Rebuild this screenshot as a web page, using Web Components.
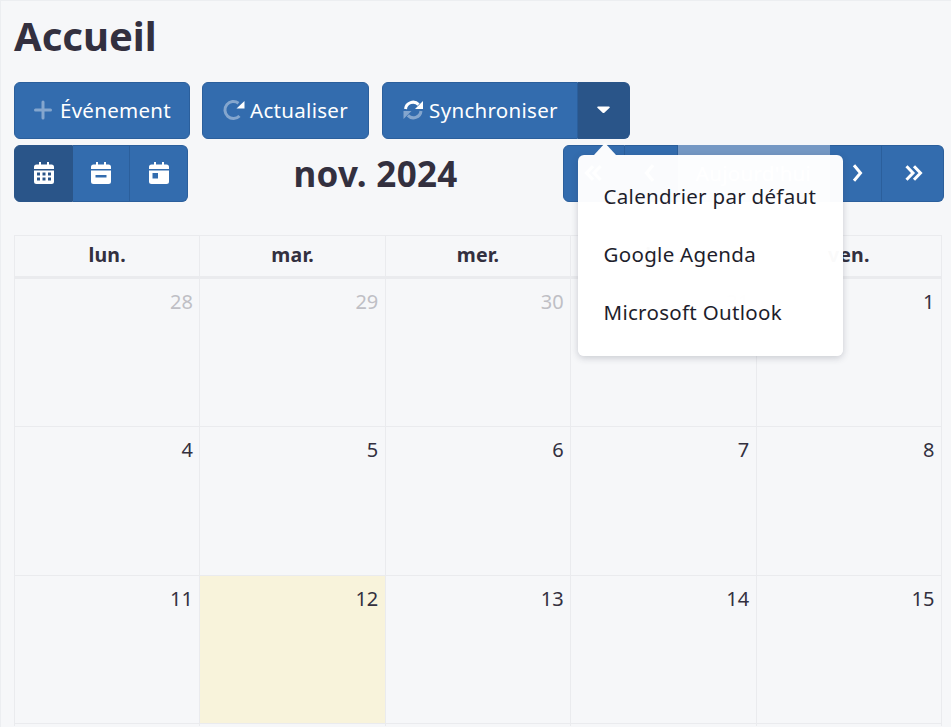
<!DOCTYPE html>
<html lang="fr">
<head>
<meta charset="utf-8">
<title>Accueil</title>
<style>
  html, body { margin: 0; height: 100%; overflow: hidden; }
  body {
    box-sizing: border-box;
    height: 727px;
    background: #f6f7f9;
    border-top: 1px solid #eceef1;
    border-left: 1px solid #eceef1;
    color: #33303f;
    font-family: "Noto Sans", "Liberation Sans", sans-serif;
  }
</style>
</head>
<body>
  <home-page></home-page>

<script>
const ICONS = {
  plus: `<svg viewBox="0 0 22 22" width="22" height="22"><path d="M10 3v16M2.500 11h15" stroke="#fff" stroke-opacity=".4" stroke-width="3" stroke-linecap="round" fill="none"/></svg>`,
  refresh: `<svg viewBox="0 0 22 22" width="22" height="22">
      <path d="M16.500 17A8.500 8.500 0 1 1 15.500 4.200" stroke="#fff" stroke-opacity=".4" stroke-width="3" fill="none"/>
      <path d="M21.500 2v7.500h-8z" fill="#fff"/></svg>`,
  sync: `<svg viewBox="0 0 22 22" width="22" height="22">
      <path d="M3.500 10A7.600 7.600 0 0 1 16.600 5.600" stroke="#fff" stroke-width="3" fill="none"/>
      <path d="M21 2v8h-8z" fill="#fff"/>
      <path d="M19 12A7.600 7.600 0 0 1 5.900 16.400" stroke="#fff" stroke-opacity=".4" stroke-width="3" fill="none"/>
      <path d="M1.500 20v-8h8z" fill="#fff" fill-opacity=".4"/></svg>`,
  caret: `<svg viewBox="0 0 14 8" width="13" height="7.500"><path d="M1 .5h12a.8.8 0 0 1 .6 1.300L7.600 7.400a.8.8 0 0 1-1.200 0L.4 1.800A.8.8 0 0 1 1 .5z" fill="#fff"/></svg>`,
  month: `<svg viewBox="0 0 20 22" width="20" height="22"><path fill="#fff" fill-rule="evenodd" d="M5 0h2v2.500h6V0h2v2.500h2.500A2.500 2.500 0 0 1 20 5v2H0V5a2.500 2.500 0 0 1 2.500-2.500H5zM0 8.500h20V19.500a2.500 2.500 0 0 1-2.500 2.500h-15A2.500 2.500 0 0 1 0 19.500zM3 10.500v3h3v-3zM8.500 10.500v3h3v-3zM14 10.500v3h3v-3zM3 15.500v3h3v-3zM8.500 15.500v3h3v-3zM14 15.500v3h3v-3z"/></svg>`,
  day: `<svg viewBox="0 0 20 22" width="20" height="22"><path fill="#fff" fill-rule="evenodd" d="M5 0h2v2.500h6V0h2v2.500h2.500A2.500 2.500 0 0 1 20 5v2H0V5a2.500 2.500 0 0 1 2.500-2.500H5zM0 8.500h20V19.500a2.500 2.500 0 0 1-2.500 2.500h-15A2.500 2.500 0 0 1 0 19.500zM4.500 13v2.500h11V13z"/></svg>`,
  week: `<svg viewBox="0 0 20 22" width="20" height="22"><path fill="#fff" fill-rule="evenodd" d="M5 0h2v2.500h6V0h2v2.500h2.500A2.500 2.500 0 0 1 20 5v2H0V5a2.500 2.500 0 0 1 2.500-2.500H5zM0 8.500h20V19.500a2.500 2.500 0 0 1-2.500 2.500h-15A2.500 2.500 0 0 1 0 19.500zM3.500 11v5.500h5.500V11z"/></svg>`,
  first: `<svg viewBox="0 0 22 22" width="22" height="22"><path d="M10 4.200 3.500 11l6.500 6.800M17.500 4.200 11 11l6.500 6.800" stroke="#fff" stroke-width="3" fill="none"/></svg>`,
  prev: `<svg viewBox="0 0 14 22" width="14" height="22"><path d="M9 3.200 2.500 11 9 18.800" stroke="#fff" stroke-width="3" fill="none"/></svg>`,
  next: `<svg viewBox="0 0 14 22" width="14" height="22"><path d="M5 3.200 11.500 11 5 18.800" stroke="#fff" stroke-width="3" fill="none"/></svg>`,
  last: `<svg viewBox="0 0 22 22" width="22" height="22"><path d="M4.500 4.200 11 11l-6.500 6.800M12 4.200 18.500 11 12 17.800" stroke="#fff" stroke-width="3" fill="none"/></svg>`
};

class UiButton extends HTMLElement {
  constructor() {
    super();
    const shadow = this.attachShadow({ mode: 'open' });
    const icon = ICONS[this.getAttribute('icon')] || '';
    shadow.innerHTML = `
      <style>
        :host {
          display: flex;
          box-sizing: border-box;
          align-items: center;
          justify-content: center;
          gap: 5px;
          height: 57px;
          padding-bottom: 2px;
          width: var(--w, auto);
          background: #336cae;
          border: 1px solid #2b5f9c;
          border-radius: 6px;
          color: #fff;
          font-size: 20.500px;
          letter-spacing: .3px;
          white-space: nowrap;
        }
        :host([grouped]) { border-radius: 0; border-left-width: 0; }
        :host([first]) { border-radius: 6px 0 0 6px; border-left-width: 1px; }
        :host([last]) { border-radius: 0 6px 6px 0; }
        :host([active]) { background: #2a5589; border-color: #2a5589; }
        :host([disabled]) { background: #7598c4; border-color: #7598c4; }
        svg { display: block; flex: none; }
      </style>
      ${icon}<slot></slot>
    `;
  }
}
customElements.define('ui-button', UiButton);

class ButtonGroup extends HTMLElement {
  constructor() {
    super();
    this.attachShadow({ mode: 'open' }).innerHTML = `
      <style>:host { display: flex; }</style>
      <slot></slot>
    `;
  }
}
customElements.define('button-group', ButtonGroup);

class SyncMenu extends HTMLElement {
  constructor() {
    super();
    this.attachShadow({ mode: 'open' }).innerHTML = `
      <style>
        :host {
          position: absolute;
          left: 578px;
          top: 155px;
          width: 265px;
          height: 201px;
          box-sizing: border-box;
          padding-top: 12px;
          background: rgba(255, 255, 255, .975);
          border-radius: 6px;
          box-shadow: 0 2px 7px rgba(40, 45, 70, .22);
          color: #1e1e2c;
          font-size: 20.500px;
          letter-spacing: .3px;
          z-index: 5;
        }
        .arrow {
          position: absolute;
          left: 16px;
          top: -12px;
          width: 0;
          height: 0;
          border: 11px solid transparent;
          border-top: 0;
          border-bottom: 12px solid rgba(255, 255, 255, .975);
        }
        ::slotted(div) {
          height: 58px;
          line-height: 58px;
          padding-left: 25.500px;
          white-space: nowrap;
        }
      </style>
      <div class="arrow"></div>
      <slot></slot>
    `;
  }
}
customElements.define('sync-menu', SyncMenu);

class MonthCalendar extends HTMLElement {
  constructor() {
    super();
    const days = ['lun.', 'mar.', 'mer.', 'jeu.', 'ven.'];
    const rows = [
      [[28, 1], [29, 1], [30, 1], [31, 1], [1]],
      [[4], [5], [6], [7], [8]],
      [[11], [12, 0, 1], [13], [14], [15]]
    ];
    const head = days.map(d => `<div class="th">${d}</div>`).join('');
    const body = rows.flat().map(([n, other, today]) =>
      `<div class="td${other ? ' other' : ''}${today ? ' today' : ''}">${n}</div>`).join('');
    // the fourth week only starts at the window's edge: its cells stay empty
    const tail = days.map(() => '<div class="tail"></div>').join('');
    this.attachShadow({ mode: 'open' }).innerHTML = `
      <style>
        :host {
          display: grid;
          grid-template-columns: repeat(5, 1fr);
          grid-template-rows: 42.500px repeat(3, 148.500px) 2px;
          border-top: 1px solid #eaebee;
          border-left: 1px solid #eaebee;
        }
        .th, .td, .tail {
          box-sizing: border-box;
          border-right: 1px solid #eaebee;
        }
        .th, .td { border-bottom: 1px solid #eaebee; }
        .th {
          border-bottom-width: 3px;
          font-size: 19.500px;
          font-weight: 700;
          letter-spacing: .2px;
          text-align: center;
          line-height: 38px;
        }
        .td {
          padding: 9px 6.500px 0 0;
          text-align: right;
          font-size: 20px;
          line-height: 27px;
        }
        .other { color: #bfbfc5; }
        .today { background: #f8f3db; }
      </style>
      ${head}${body}${tail}
    `;
  }
}
customElements.define('month-calendar', MonthCalendar);

class HomePage extends HTMLElement {
  constructor() {
    super();
    this.attachShadow({ mode: 'open' }).innerHTML = `
      <style>
        :host {
          display: block;
          padding: 0 7px 0 13px;
        }
        h1 {
          margin: 0;
          height: 81px;
          font-size: 40px;
          font-weight: 700;
          line-height: 70px;
        }
        .actions {
          display: flex;
          gap: 12px;
          margin-bottom: 6px;
        }
        .actions button-group { margin-left: 1px; }
        .nav {
          display: flex;
          align-items: center;
          height: 57px;
          margin-bottom: 33px;
        }
        .period {
          width: 375px;
          text-align: center;
          font-size: 35px;
          font-weight: 700;
          letter-spacing: .3px;
        }
        month-calendar { margin-right: 2px; }
      </style>
      <h1>Accueil</h1>
      <div class="actions">
        <ui-button icon="plus" style="--w:176px">Événement</ui-button>
        <ui-button icon="refresh" style="--w:167px">Actualiser</ui-button>
        <button-group>
          <ui-button grouped first icon="sync" style="--w:196px">Synchroniser</ui-button>
          <ui-button grouped last active icon="caret" style="--w:52px"></ui-button>
        </button-group>
      </div>
      <div class="nav">
        <button-group>
          <ui-button grouped first active icon="month" style="--w:59px"></ui-button>
          <ui-button grouped icon="day" style="--w:57px"></ui-button>
          <ui-button grouped last icon="week" style="--w:58px"></ui-button>
        </button-group>
        <div class="period">nov. 2024</div>
        <button-group>
          <ui-button grouped first icon="first" style="--w:62px"></ui-button>
          <ui-button grouped icon="prev" style="--w:53px"></ui-button>
          <ui-button grouped disabled style="--w:152px">Aujourd'hui</ui-button>
          <ui-button grouped icon="next" style="--w:52px"></ui-button>
          <ui-button grouped last icon="last" style="--w:62px"></ui-button>
        </button-group>
      </div>
      <month-calendar></month-calendar>
      <sync-menu>
        <div>Calendrier par défaut</div>
        <div>Google Agenda</div>
        <div>Microsoft Outlook</div>
      </sync-menu>
    `;
  }
}
customElements.define('home-page', HomePage);
</script>
</body>
</html>
